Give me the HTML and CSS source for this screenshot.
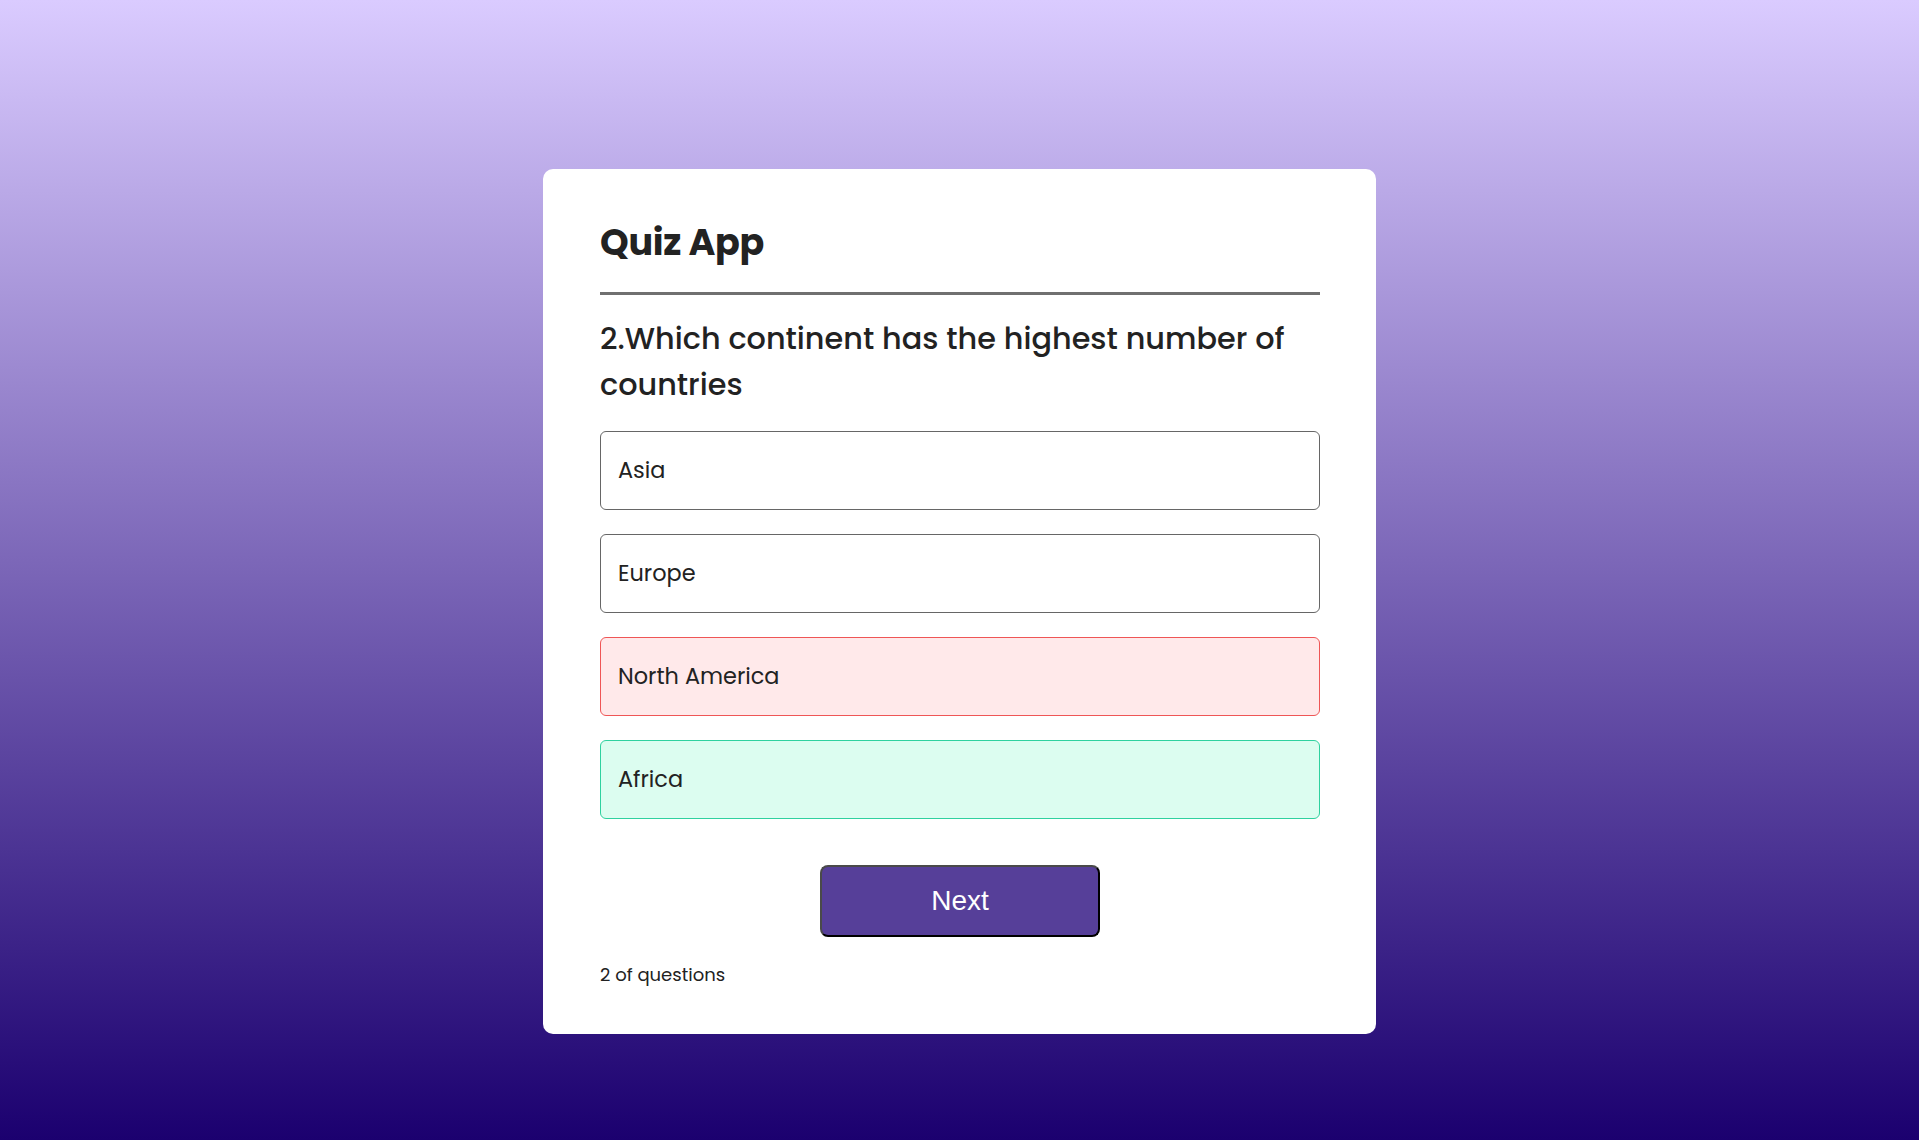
FILE: index.html
```html
<!DOCTYPE html>
<html lang="en">
<head>
<meta charset="utf-8">
<title>Quiz App</title>
<link rel="stylesheet" href="styles.css">
</head>
<body>
<div class="page">
  <main class="card">
    <h1 class="title">Quiz App</h1>
    <h2 class="question">2.Which continent has the highest number of countries</h2>
    <div class="options">
      <div class="option">Asia</div>
      <div class="option">Europe</div>
      <div class="option wrong">North America</div>
      <div class="option correct">Africa</div>
    </div>
    <button class="next">Next</button>
    <p class="count">2 of questions</p>
  </main>
</div>
</body>
</html>
```

FILE: styles.css
```css
html, body {
  margin: 0;
  padding: 0;
}
body {
  font-family: "Poppins", "Open Sans", "DejaVu Sans", sans-serif;
  color: #222;
}
.page {
  min-height: 1140px;
  background: linear-gradient(180deg, #dacbff 0%, #1b006f 100%);
  padding-top: 169px;
  box-sizing: border-box;
}
.card {
  width: 720px;
  margin: 0 auto;
  background: #fff;
  border-radius: 10px;
  padding: 47px 56px 46px 57px;
}
.title {
  margin: 0;
  font-size: 36.5px;
  font-weight: 700;
  line-height: 1.5;
  padding-bottom: 21px;
  border-bottom: 3px solid #707070;
  letter-spacing: -0.3px;
}
.question {
  margin: 21px 0 23px;
  font-size: 30.3px;
  font-weight: 500;
  line-height: 46px;
}
.options {
  display: flex;
  flex-direction: column;
  gap: 24px;
}
.option {
  height: 79px;
  box-sizing: border-box;
  border: 1px solid #666;
  border-radius: 6px;
  display: flex;
  align-items: center;
  padding-left: 17px;
  font-size: 22.4px;
}
.option.wrong {
  background: #ffe9ea;
  border-color: #ef5656;
}
.option.correct {
  background: #dcfdf0;
  border-color: #2fd19f;
}
.next {
  display: block;
  width: 280px;
  height: 72px;
  margin: 46px auto 0;
  background: #563f99;
  color: #fff;
  font-family: "Liberation Sans", Arial, sans-serif;
  font-size: 28px;
  border: 2px solid;
  border-color: #4a4a4a #000 #000 #4a4a4a;
  border-radius: 8px;
}
.count {
  margin: 24px 0 0;
  font-size: 18px;
}
```
